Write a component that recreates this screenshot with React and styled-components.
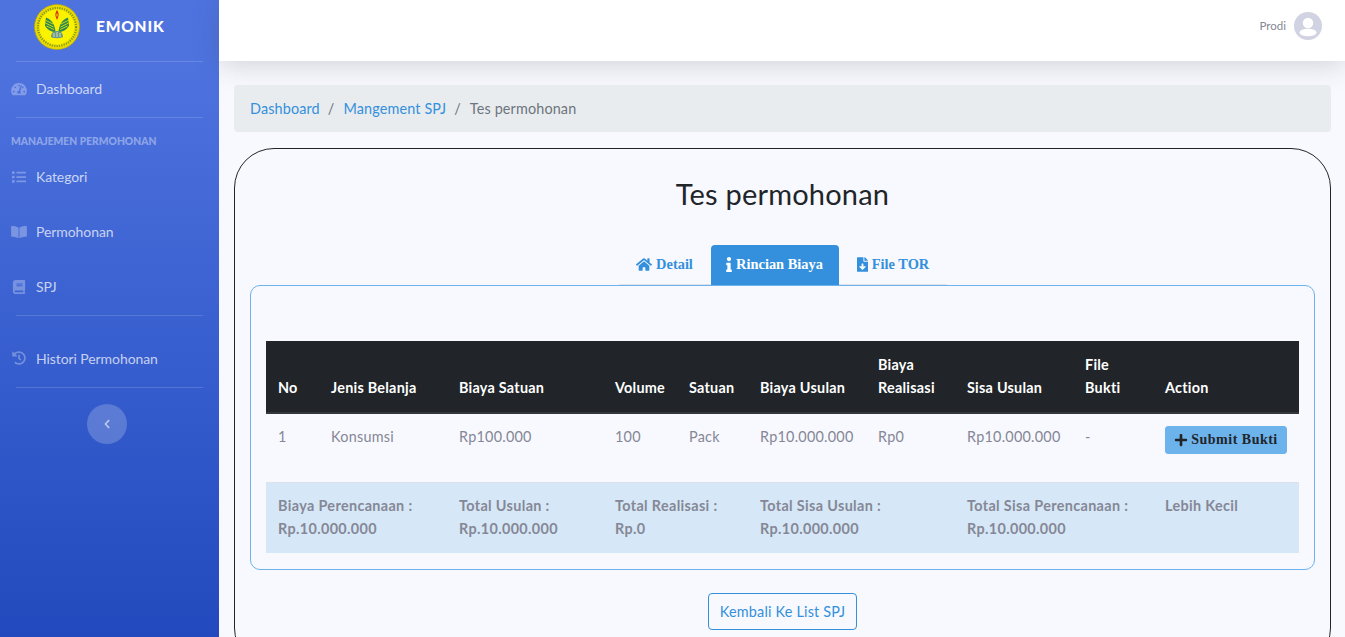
import styled, { createGlobalStyle } from "styled-components";
import {
  FaTachometerAlt,
  FaList,
  FaBookOpen,
  FaBook,
  FaHistory,
  FaChevronLeft,
  FaHome,
  FaInfo,
  FaFileDownload,
  FaPlus,
} from "react-icons/fa";

const FONT = `"Lato", "Noto Sans", sans-serif`;
const SERIF = `"Liberation Serif", serif`;

const GlobalStyle = createGlobalStyle`
  html, body {
    margin: 0;
    padding: 0;
    height: 100%;
    overflow: hidden;
  }
  body {
    background: #f8f9fe;
    font-family: ${FONT};
    color: #858796;
  }
  * { box-sizing: border-box; }
`;

const Wrapper = styled.div`
  display: flex;
  width: 1345px;
  height: 637px;
  overflow: hidden;
`;

const Sidebar = styled.aside`
  width: 219px;
  flex-shrink: 0;
  height: 637px;
  background: linear-gradient(180deg, #4e73df 10%, #224abe 100%);
  display: flex;
  flex-direction: column;
`;

const Brand = styled.div`
  height: 61px;
  padding-left: 34px;
  display: flex;
  align-items: flex-start;
  gap: 16px;
  padding-top: 4px;
`;

const BrandName = styled.span`
  color: #fff;
  font-size: 15.5px;
  font-weight: 900;
  letter-spacing: 0.8px;
  margin-top: 13px;
`;

const Divider = styled.hr`
  margin: 0 16px;
  border: 0;
  border-top: 1px solid rgba(255, 255, 255, 0.15);
  flex-shrink: 0;
`;

const NavItem = styled.div`
  height: ${(p) => p.$h || 55}px;
  padding: ${(p) => p.$pt || 0}px 0 2px 11px;
  display: flex;
  align-items: center;
  color: rgba(255, 255, 255, 0.72);
  font-size: 14px;
  letter-spacing: -0.08px;
  svg {
    width: 16px;
    height: 14px;
    color: rgba(255, 255, 255, 0.3);
    margin-right: 9px;
    flex-shrink: 0;
  }
`;

const SideHeading = styled.div`
  padding: 17px 0 0 11px;
  height: 32px;
  font-size: 10.3px;
  font-weight: 900;
  color: rgba(255, 255, 255, 0.4);
  letter-spacing: 0;
  white-space: nowrap;
`;

const Toggle = styled.button`
  width: 40px;
  height: 40px;
  border-radius: 50%;
  border: 0;
  align-self: center;
  margin: 16px 0 0 -5px;
  padding: 0;
  background: rgba(255, 255, 255, 0.2);
  color: rgba(255, 255, 255, 0.6);
  display: flex;
  align-items: center;
  justify-content: center;
  svg {
    width: 8px;
    height: 10px;
  }
`;

const Main = styled.main`
  flex: 1;
  min-width: 0;
  display: flex;
  flex-direction: column;
`;

const Topbar = styled.header`
  height: 61px;
  flex-shrink: 0;
  background: #fff;
  box-shadow: 0 4px 28px 0 rgba(58, 59, 69, 0.2);
  display: flex;
  align-items: center;
  justify-content: flex-end;
  gap: 8px;
  padding: 0 23px 10px 0;
`;

const UserName = styled.span`
  font-size: 11.5px;
  color: #858796;
`;

const Avatar = styled.svg`
  width: 28px;
  height: 28px;
  display: block;
`;

const Content = styled.div`
  padding: 24px 14px 0 15px;
`;

const Breadcrumb = styled.nav`
  height: 47px;
  background: #e9ecef;
  border-radius: 4px;
  display: flex;
  align-items: center;
  padding: 0 16px 1px;
  font-size: 14.4px;
  letter-spacing: 0.14px;
`;

const Crumb = styled.span`
  color: ${(p) => (p.$active ? "#6c757d" : "#3490dc")};
`;

const Slash = styled.span`
  color: #6c757d;
  padding: 0 9px 0 8px;
`;

const Card = styled.section`
  margin-top: 16px;
  height: 520px;
  border: 1px solid #212529;
  border-radius: 40px;
  padding: 0 15px;
`;

const Title = styled.h2`
  margin: 26px 0 0;
  height: 38px;
  line-height: 38px;
  text-align: center;
  font-size: 29px;
  font-weight: 400;
  color: #212529;
  letter-spacing: 0.2px;
`;

const Tabs = styled.div`
  margin: 32px auto 0;
  width: 328px;
  height: 40px;
  display: flex;
  align-items: stretch;
  border-bottom: 1px solid #dee2e6;
`;

const Tab = styled.div`
  width: ${(p) => p.$w}px;
  height: 40px;
  margin-left: ${(p) => p.$ml || 0}px;
  padding-bottom: 2px;
  display: flex;
  align-items: center;
  justify-content: center;
  gap: 4px;
  font-family: ${SERIF};
  font-weight: 700;
  font-size: 14.4px;
  border-radius: 4px 4px 0 0;
  color: ${(p) => (p.$active ? "#fff" : "#3490dc")};
  background: ${(p) => (p.$active ? "#3490dc" : "transparent")};
  svg {
    height: 15px;
    width: ${(p) => p.$icon}px;
    flex-shrink: 0;
  }
`;

const Panel = styled.div`
  height: 285px;
  border: 1px solid #6cb2eb;
  border-radius: 10px;
  padding: 55px 15px 0;
`;

const Table = styled.table`
  width: 1033px;
  table-layout: fixed;
  border-collapse: collapse;
  font-size: 14.4px;
  letter-spacing: 0.25px;
`;

const Th = styled.th`
  background: #212529;
  color: #fff;
  font-weight: 700;
  text-align: left;
  vertical-align: bottom;
  padding: 12px 12px 13px;
  line-height: 23px;
  border-bottom: 2px solid #32383e;
`;

const Td = styled.td`
  height: 69px;
  padding: 11px 12px 12px;
  color: #858796;
  line-height: 23px;
  vertical-align: top;
`;

const FootRow = styled.tr`
  background: #d6e8f7;
`;

const FootCell = styled.td`
  height: 71px;
  padding: 11px 12px 12px;
  color: #858796;
  font-weight: 700;
  line-height: 23px;
  letter-spacing: 0.35px;
  vertical-align: top;
  border-top: 1px solid #dee2e6;
`;

const SubmitButton = styled.button`
  width: 122px;
  height: 28px;
  margin-top: 1px;
  border: 1px solid #6cb2eb;
  border-radius: 3px;
  background: #6cb2eb;
  color: #212529;
  font-family: ${SERIF};
  font-weight: 700;
  font-size: 14px;
  letter-spacing: 0.5px;
  padding: 0;
  display: flex;
  align-items: center;
  justify-content: center;
  gap: 3px;
  white-space: nowrap;
  svg {
    width: 14px;
    height: 14px;
  }
`;

const BackRow = styled.div`
  display: flex;
  justify-content: center;
  margin-top: 23px;
`;

const BackButton = styled.button`
  width: 149px;
  height: 37px;
  background: transparent;
  border: 1px solid #3490dc;
  border-radius: 4px;
  color: #3490dc;
  font-family: ${FONT};
  font-size: 14.4px;
  letter-spacing: 0.2px;
  padding: 0;
`;

const columns = [
  { name: "No", w: 53 },
  { name: "Jenis Belanja", w: 128 },
  { name: "Biaya Satuan", w: 156 },
  { name: "Volume", w: 74 },
  { name: "Satuan", w: 71 },
  { name: "Biaya Usulan", w: 118 },
  { name: "Biaya Realisasi", w: 89 },
  { name: "Sisa Usulan", w: 118 },
  { name: "File Bukti", w: 80 },
  { name: "Action", w: 146 },
];

// seal from the sidebar, drawn by hand
const Logo = () => (
  <svg width="46" height="46" viewBox="0 0 46 46" style={{ flexShrink: 0 }}>
    <circle cx="23" cy="23" r="22.5" fill="#e8d800" stroke="#b9a800" strokeDasharray="2 1.4" />
    <circle cx="23" cy="23" r="20" fill="#f7ea00" />
    <circle cx="23" cy="23" r="19" fill="none" stroke="#5a7a20" strokeWidth="2.2" strokeDasharray="1.4 1" opacity="0.7" />
    <circle cx="23" cy="23" r="17" fill="#fbf200" />
    <path d="M23 6c2 3 2.400 5 0 10-2.400-5-2-7 0-10z" fill="#d8341c" />
    <path d="M23 9c.8 1.500.8 2.600 0 4-.8-1.400-.8-2.500 0-4z" fill="#f7ea00" />
    <path d="M21.500 28c-.5-7-3.500-12-9.500-14.500l-1 8c2 4 6 6.500 10.500 6.500z" fill="#2c8750" />
    <path d="M24.500 28c.5-7 3.500-12 9.500-14.500l1 8c-2 4-6 6.500-10.500 6.500z" fill="#2c8750" />
    <path d="M12 16.500l7 3.500M11.500 19l8 4M12.500 22l7.500 3.500M27 20l7-3.500M26.500 23l8-4M26 25.500l7.500-3.500" stroke="#f7ea00" strokeWidth="0.8" />
    <path d="M17 33c0-4 2.500-6 6-6s6 2 6 6c-2 1.600-10 1.600-12 0z" fill="#6d9a82" />
    <path d="M20 29v4M23 28v5M26 29v4" stroke="#e8ecd0" strokeWidth="0.8" />
  </svg>
);

export default function App() {
  return (
    <Wrapper>
      <GlobalStyle />
      <Sidebar>
        <Brand>
          <Logo />
          <BrandName>EMONIK</BrandName>
        </Brand>
        <Divider />
        <NavItem>
          <FaTachometerAlt />
          Dashboard
        </NavItem>
        <Divider />
        <SideHeading>MANAJEMEN PERMOHONAN</SideHeading>
        <NavItem>
          <FaList />
          Kategori
        </NavItem>
        <NavItem>
          <FaBookOpen />
          Permohonan
        </NavItem>
        <NavItem>
          <FaBook />
          SPJ
        </NavItem>
        <Divider />
        <NavItem $h={71} $pt={15}>
          <FaHistory />
          Histori Permohonan
        </NavItem>
        <Divider />
        <Toggle>
          <FaChevronLeft />
        </Toggle>
      </Sidebar>
      <Main>
        <Topbar>
          <UserName>Prodi</UserName>
          <Avatar viewBox="0 0 28 28">
            <circle cx="14" cy="14" r="14" fill="#d1d3e2" />
            <circle cx="14" cy="11" r="5.2" fill="#fff" />
            <ellipse cx="14" cy="20.500" rx="8.500" ry="3.800" fill="#fff" />
          </Avatar>
        </Topbar>
        <Content>
          <Breadcrumb>
            <Crumb>Dashboard</Crumb>
            <Slash>/</Slash>
            <Crumb>Mangement SPJ</Crumb>
            <Slash>/</Slash>
            <Crumb $active>Tes permohonan</Crumb>
          </Breadcrumb>
          <Card>
            <Title>Tes permohonan</Title>
            <Tabs>
              <Tab $w={92} $icon={16}>
                <FaHome />
                Detail
              </Tab>
              <Tab $w={128} $icon={6} $active>
                <FaInfo />
                Rincian Biaya
              </Tab>
              <Tab $w={107} $icon={11} $ml={1}>
                <FaFileDownload />
                File TOR
              </Tab>
            </Tabs>
            <Panel>
              <Table>
                <colgroup>
                  {columns.map((c) => (
                    <col key={c.name} width={c.w} />
                  ))}
                </colgroup>
                <thead>
                  <tr>
                    {columns.map((c) => (
                      <Th key={c.name}>{c.name}</Th>
                    ))}
                  </tr>
                </thead>
                <tbody>
                  <tr>
                    <Td>1</Td>
                    <Td>Konsumsi</Td>
                    <Td>Rp100.000</Td>
                    <Td>100</Td>
                    <Td>Pack</Td>
                    <Td>Rp10.000.000</Td>
                    <Td>Rp0</Td>
                    <Td>Rp10.000.000</Td>
                    <Td>-</Td>
                    <Td>
                      <SubmitButton>
                        <FaPlus />
                        Submit Bukti
                      </SubmitButton>
                    </Td>
                  </tr>
                  <FootRow>
                    <FootCell colSpan={2}>
                      Biaya Perencanaan :<br />
                      Rp.10.000.000
                    </FootCell>
                    <FootCell>
                      Total Usulan :<br />
                      Rp.10.000.000
                    </FootCell>
                    <FootCell colSpan={2}>
                      Total Realisasi :<br />
                      Rp.0
                    </FootCell>
                    <FootCell colSpan={2}>
                      Total Sisa Usulan :<br />
                      Rp.10.000.000
                    </FootCell>
                    <FootCell colSpan={2}>
                      Total Sisa Perencanaan :<br />
                      Rp.10.000.000
                    </FootCell>
                    <FootCell>Lebih Kecil</FootCell>
                  </FootRow>
                </tbody>
              </Table>
            </Panel>
            <BackRow>
              <BackButton>Kembali Ke List SPJ</BackButton>
            </BackRow>
          </Card>
        </Content>
      </Main>
    </Wrapper>
  );
}
